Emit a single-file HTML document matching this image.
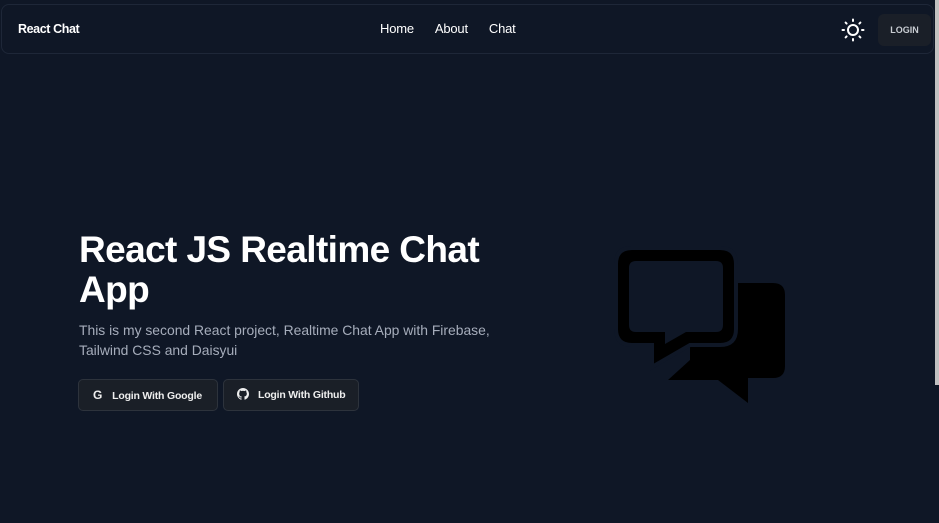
<!DOCTYPE html>
<html><head><meta charset="utf-8"><style>
*{margin:0;padding:0;box-sizing:border-box}
body{width:939px;height:523px;background:#0f1726;overflow:hidden;font-family:"Liberation Sans",sans-serif;position:relative;color:#fff}
.nav{position:absolute;left:1px;top:4px;width:933px;height:50px;border:1px solid #1e2738;border-radius:8px;background:#0f1726}
.brand{position:absolute;left:16px;top:17px;font-weight:bold;font-size:12.5px;letter-spacing:-0.4px}
.links{position:absolute;left:378px;top:16px;font-size:13px;letter-spacing:-0.2px}
.links span{margin-right:21px}
.login{position:absolute;left:876px;top:9px;width:53px;height:32px;background:#1a1f28;border-radius:6px;font-size:9px;color:#c8ccd2;font-weight:bold;text-align:center;line-height:32px}
.sb{position:absolute;right:0;top:0;width:4px;height:385px;background:#c1c1c1}
h1{position:absolute;left:79px;top:230px;font-size:37px;line-height:40px;font-weight:bold;letter-spacing:-0.6px;width:460px}
p{position:absolute;left:79px;top:320px;font-size:13.9px;line-height:20px;color:#a6adbb;width:460px}
.btn{position:absolute;top:379px;height:32px;border:1px solid #2d333c;background:#1a1f27;border-radius:5px;font-size:10.5px;font-weight:bold;line-height:30px;color:#eee;letter-spacing:-0.2px}
</style></head><body>
<div class="nav">
<div class="brand">React Chat</div>
<div class="links"><span>Home</span><span>About</span><span>Chat</span></div>
<svg style="position:absolute;left:839px;top:13px" width="24" height="24" viewBox="0 0 24 24" fill="none" stroke="#fff" stroke-width="2" stroke-linecap="round"><circle cx="12" cy="12" r="5"/><path d="M12 1.5v1.5M12 21v1.5M1.5 12H3M21 12h1.5M4.6 4.6l1 1M18.4 18.4l1 1M4.6 19.4l1-1M18.4 5.6l1-1"/></svg>
<div class="login">LOGIN</div>
</div>
<div class="sb"></div>
<h1>React JS Realtime Chat App</h1>
<p>This is my second React project, Realtime Chat App with Firebase, Tailwind CSS and Daisyui</p>
<div class="btn" style="left:78px;width:140px;padding-left:14px"><b style="font-size:12px;margin-right:10px">G</b>Login With Google</div>
<div class="btn" style="left:223px;width:136px;padding-left:13px"><svg width="12" height="12" viewBox="0 0 16 16" style="vertical-align:-2px;margin-right:9px"><path fill="#eee" d="M8 0C3.6 0 0 3.6 0 8c0 3.5 2.3 6.5 5.5 7.6.4.1.5-.2.5-.4v-1.4c-2.2.5-2.7-1-2.7-1-.4-.9-.9-1.2-.9-1.2-.7-.5.1-.5.1-.5.8.1 1.2.8 1.2.8.7 1.2 1.9.9 2.3.7.1-.5.3-.9.5-1.1-1.8-.2-3.600-.9-3.6-4 0-.9.3-1.6.8-2.1-.1-.2-.4-1 .1-2.1 0 0 .7-.2 2.2.8.6-.2 1.3-.3 2-.3s1.4.1 2 .3c1.5-1 2.2-.8 2.2-.8.4 1.1.2 1.9.1 2.1.5.6.8 1.3.8 2.1 0 3.1-1.9 3.7-3.6 3.9.3.3.5.8.5 1.5v2.2c0 .2.1.5.6.4C13.7 14.5 16 11.5 16 8c0-4.4-3.6-8-8-8z"/></svg>Login With Github</div>
<svg style="position:absolute;left:0;top:0" width="939" height="523">
<path d="M690 283 H773 Q785 283 785 295 V366 Q785 378 773 378 H748 V403 L718 380 H668 L690 360 Z" fill="#000"/>
<path d="M632 248 H720 Q736 248 736 264 V329 Q736 345 720 345 H690 L652 367 V345 H632 Q616 345 616 329 V264 Q616 248 632 248 Z" fill="#000" stroke="#0f1726" stroke-width="4"/>
<path d="M636 261 H716 Q723 261 723 268 V325 Q723 332 716 332 H686 L665 344 V332 H636 Q629 332 629 325 V268 Q629 261 636 261 Z" fill="#0f1726"/>
</svg>
</body></html>
